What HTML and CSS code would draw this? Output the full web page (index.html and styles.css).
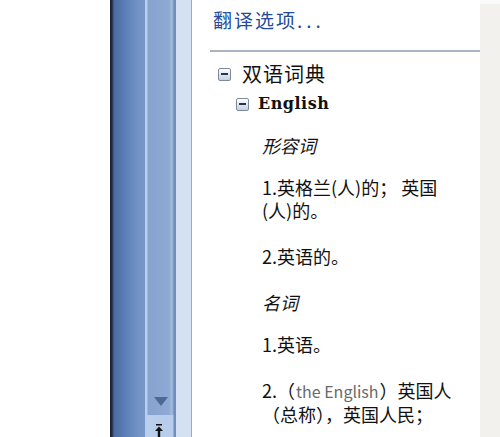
FILE: index.html
```html
<!DOCTYPE html>
<html lang="zh-CN">
<head>
    <meta charset="UTF-8">
    <meta name="viewport" content="width=device-width, initial-scale=1.0">
    <title>信息检索</title>
    <link rel="stylesheet" href="styles.css">
</head>
<body>
    <div class="window">
        <div class="blank"></div>
        <div class="frame-edge"></div>

        <div class="scrollbar">
            <div class="scroll-track">
                <span class="arrow-down"></span>
            </div>
            <div class="scroll-foot">
                <svg width="10" height="14" viewBox="0 0 10 14">
                    <rect x="2" y="0" width="6" height="1.5" fill="#111"/>
                    <polygon points="5,2.5 9,7 1,7" fill="#111"/>
                    <rect x="3.8" y="6" width="2.4" height="8" fill="#111"/>
                </svg>
            </div>
        </div>

        <div class="gutter"></div>

        <div class="pane">
            <div class="options">翻译选项<span class="dots">...</span></div>
            <div class="divider"></div>

            <div class="node">
                <span class="toggle"></span>
                <span class="node-title">双语词典</span>
            </div>
            <div class="node sub">
                <span class="toggle"></span>
                <span class="node-title lang">English</span>
            </div>

            <div class="entry">
                <p class="pos">形容词</p>
                <p class="def">1.英格兰(人)的； 英国(人)的。</p>
                <p class="def">2.英语的。</p>
                <p class="pos">名词</p>
                <p class="def">1.英语。</p>
                <p class="def">2.（<span class="latin">the English</span>）英国人（总称），英国人民；</p>
            </div>
        </div>

        <div class="side-strip"></div>
    </div>
</body>
</html>
```

FILE: styles.css
```css
body {
    margin: 0;
    background: #fff;
    font-family: "Noto Sans CJK SC", "Noto Sans", sans-serif;
    color: #111;
}
.window {
    display: flex;
    width: 500px;
    height: 437px;
    overflow: hidden;
}
.blank {
    width: 110px;
    flex-shrink: 0;
    background: #fff;
}
.frame-edge {
    width: 35px;
    flex-shrink: 0;
    background: linear-gradient(to right, #18202c 0px, #222d40 2px, #4a6ba1 4px, #5a7db5 14px, #6d90c4 26px, #7898ca 35px);
}
.scrollbar {
    width: 31px;
    flex-shrink: 0;
    display: flex;
    flex-direction: column;
}
.scroll-track {
    flex: 1;
    display: flex;
    flex-direction: column;
    justify-content: flex-end;
    align-items: center;
    padding-bottom: 9px;
    background: linear-gradient(to right, #b9cfec 0px, #b9cfec 2px, #87a3ce 3px, #8ea9d2 24px, #a5bde0 27px, #6f8ebd 29px, #6f8ebd 31px);
}
.arrow-down {
    width: 0;
    height: 0;
    border-left: 7px solid transparent;
    border-right: 7px solid transparent;
    border-top: 9px solid #4d6896;
}
.scroll-foot {
    height: 22px;
    display: flex;
    justify-content: center;
    align-items: flex-start;
    padding: 9px 3px 0 0;
    box-sizing: border-box;
    background: linear-gradient(to right, #b9cfec 0px, #b6ccea 28px, #6f8ebd 29px, #6f8ebd 31px);
}
.gutter {
    width: 15px;
    flex-shrink: 0;
    background: #d3e1f3;
    border-right: 1px solid #a1a9b3;
}
.pane {
    width: 288px;
    flex-shrink: 0;
    background: #fff;
}
.side-strip {
    flex: 1;
    background: #f3f1ee;
    border-top: 4px solid #fafafa;
}
.options {
    padding: 8px 0 0 21px;
    font-size: 19px;
    line-height: 24px;
    letter-spacing: 2px;
    color: #244c98;
}
.dots {
    letter-spacing: 4px;
}
.divider {
    height: 2px;
    margin: 18px 0 0 18px;
    background: #a9b4c6;
}
.node {
    display: flex;
    align-items: center;
    margin: 8px 0 0 26px;
    height: 28px;
    gap: 11px;
}
.node.sub {
    margin: 4px 0 0 44px;
    height: 24px;
    gap: 9px;
}
.toggle {
    position: relative;
    width: 11px;
    height: 11px;
    flex-shrink: 0;
    border: 1px solid #7d8a9e;
    border-radius: 2px;
    background: linear-gradient(#ffffff, #c5d0df);
}
.toggle::after {
    content: "";
    position: absolute;
    left: 2px;
    top: 4px;
    width: 7px;
    height: 2px;
    background: #25344f;
}
.node-title {
    font-size: 20px;
    line-height: 28px;
    letter-spacing: 1px;
}
.lang {
    font-family: "DejaVu Serif", serif;
    font-weight: bold;
    font-size: 16px;
    line-height: 24px;
    letter-spacing: 0.5px;
}
.entry {
    width: 200px;
    margin: 18px 0 0 70px;
}
.entry p {
    margin: 0 0 23px;
    font-size: 18px;
    line-height: 23px;
}
.entry .pos {
    margin-bottom: 19px;
    font-style: italic;
}
.latin {
    display: inline-block;
    margin: 0 1px;
    color: #6a6a6a;
    font-size: 16px;
}
```
